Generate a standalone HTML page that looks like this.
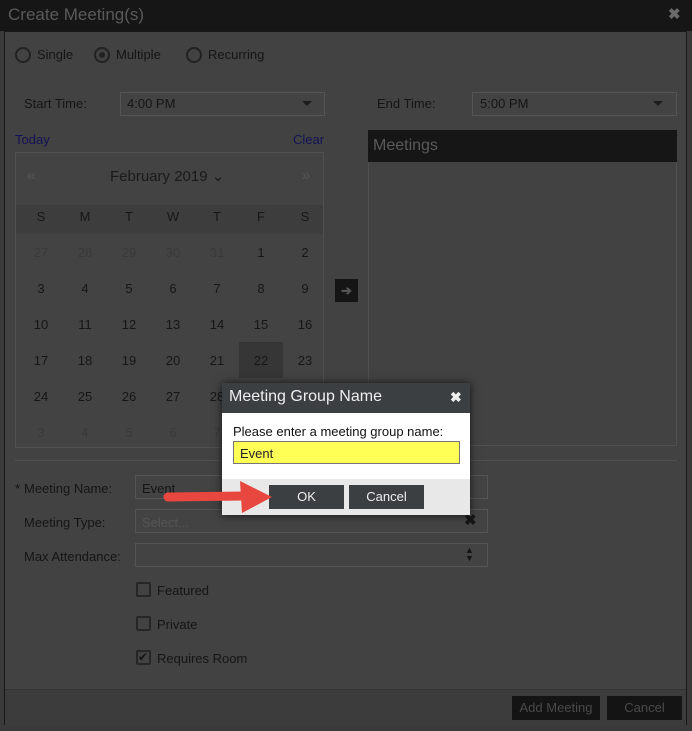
<!DOCTYPE html><html><head><style>
body{margin:0;width:692px;height:731px;background:#3a3a3a;font-family:"Liberation Sans",sans-serif;position:relative;overflow:hidden;font-size:13px;color:#151515}
.a{position:absolute}
.t{color:#111}
.sel{border:1px solid #555;background:#434343}
.cal td{width:44px;height:36px;text-align:center;font-size:13px;color:#161616;padding:0}
</style></head><body>
<div class="a" style="left:0;top:0;width:692px;height:31px;background:#161616"></div>
<div class="a" style="left:8px;top:5px;font-size:17px;color:#5a5a5a">Create Meeting(s)</div>
<div class="a" style="left:668px;top:5px;font-size:15px;color:#6a6a6a;font-weight:bold">✖</div>
<div class="a" style="left:4px;top:31px;width:683px;height:694px;background:#424242;border:1px solid #181818;box-sizing:border-box"></div>
<!-- radios -->
<div class="a" style="left:15px;top:47px;width:12px;height:12px;border:2px solid #222;border-radius:50%"></div>
<div class="a" style="left:37px;top:47px">Single</div>
<div class="a" style="left:94px;top:47px;width:12px;height:12px;border:2px solid #222;border-radius:50%"></div>
<div class="a" style="left:99px;top:52px;width:6px;height:6px;background:#222;border-radius:50%"></div>
<div class="a" style="left:116px;top:47px">Multiple</div>
<div class="a" style="left:186px;top:47px;width:12px;height:12px;border:2px solid #222;border-radius:50%"></div>
<div class="a" style="left:208px;top:47px">Recurring</div>
<div class="a" style="left:24px;top:96px">Start Time:</div>
<div class="a sel" style="left:120px;top:92px;width:203px;height:22px"></div>
<div class="a" style="left:127px;top:96px">4:00 PM</div>
<div class="a" style="left:302px;top:101px;border:5px solid transparent;border-top:5px solid #1c1c1c"></div>
<div class="a" style="left:377px;top:96px">End Time:</div>
<div class="a sel" style="left:472px;top:92px;width:203px;height:22px"></div>
<div class="a" style="left:480px;top:96px">5:00 PM</div>
<div class="a" style="left:653px;top:101px;border:5px solid transparent;border-top:5px solid #1c1c1c"></div>
<div class="a" style="left:15px;top:132px;color:#121256">Today</div>
<div class="a" style="left:293px;top:132px;color:#121256">Clear</div>
<div class="a" style="left:15px;top:152px;width:309px;height:296px;background:#434343;border:1px solid #505050;box-sizing:border-box"></div>
<div class="a" style="left:16px;top:205px;width:307px;height:29px;background:#3d3d3d"></div>
<div class="a" style="left:27px;top:167px;color:#555;font-size:15px">«</div>
<div class="a" style="left:302px;top:167px;color:#555;font-size:15px">»</div>
<div class="a" style="left:110px;top:167px;font-size:15px;color:#1a1a1a">February 2019 &#8964;</div>
<table class="a cal" style="left:19px;top:198px;border-collapse:collapse">
<tr><td>S</td><td>M</td><td>T</td><td>W</td><td>T</td><td>F</td><td>S</td></tr>
<tr style="color:#333"><td style="color:#3a3a3a">27</td><td style="color:#3a3a3a">28</td><td style="color:#3a3a3a">29</td><td style="color:#3a3a3a">30</td><td style="color:#3a3a3a">31</td><td>1</td><td>2</td></tr>
<tr><td>3</td><td>4</td><td>5</td><td>6</td><td>7</td><td>8</td><td>9</td></tr>
<tr><td>10</td><td>11</td><td>12</td><td>13</td><td>14</td><td>15</td><td>16</td></tr>
<tr><td>17</td><td>18</td><td>19</td><td>20</td><td>21</td><td style="background:#363636">22</td><td>23</td></tr>
<tr><td>24</td><td>25</td><td>26</td><td>27</td><td>28</td><td></td><td></td></tr>
<tr><td style="color:#3a3a3a">3</td><td style="color:#3a3a3a">4</td><td style="color:#3a3a3a">5</td><td style="color:#3a3a3a">6</td><td style="color:#3a3a3a">7</td><td></td><td></td></tr>
</table>
<div class="a" style="left:335px;top:279px;width:23px;height:23px;background:#151515;color:#555;text-align:center;line-height:23px;font-weight:bold">➔</div>
<div class="a" style="left:368px;top:130px;width:309px;height:316px;border:1px solid #505050;box-sizing:border-box"></div>
<div class="a" style="left:368px;top:130px;width:309px;height:32px;background:#161616"></div>
<div class="a" style="left:373px;top:137px;font-size:16px;color:#5a5a5a">Meetings</div>
<div class="a" style="left:15px;top:460px;width:662px;height:1px;background:#505050"></div>
<div class="a" style="left:15px;top:481px">*</div>
<div class="a" style="left:24px;top:481px">Meeting Name:</div>
<div class="a sel" style="left:135px;top:475px;width:351px;height:22px"></div>
<div class="a" style="left:142px;top:481px">Event</div>
<div class="a" style="left:24px;top:515px">Meeting Type:</div>
<div class="a sel" style="left:135px;top:509px;width:351px;height:22px"></div>
<div class="a" style="left:142px;top:515px;color:#555">Select...</div>
<div class="a" style="left:464px;top:511px;color:#151515;font-size:15px;font-weight:bold">✖</div>
<div class="a" style="left:24px;top:549px">Max Attendance:</div>
<div class="a sel" style="left:135px;top:543px;width:351px;height:22px"></div>
<div class="a" style="left:465px;top:546px;font-size:9px;line-height:8px;color:#151515">▲<br>▼</div>
<div class="a" style="left:136px;top:582px;width:11px;height:11px;border:2px solid #262626;border-radius:2px"></div>
<div class="a" style="left:157px;top:583px">Featured</div>
<div class="a" style="left:136px;top:616px;width:11px;height:11px;border:2px solid #262626;border-radius:2px"></div>
<div class="a" style="left:157px;top:617px">Private</div>
<div class="a" style="left:136px;top:650px;width:11px;height:11px;border:2px solid #262626;border-radius:2px;font-size:12px;line-height:10px">✔</div>
<div class="a" style="left:157px;top:651px">Requires Room</div>
<div class="a" style="left:5px;top:689px;width:681px;height:35px;background:#3c3c3c;border-top:1px solid #333"></div>
<div class="a" style="left:512px;top:696px;width:88px;height:24px;background:#141414;color:#4a4a4a;text-align:center;line-height:24px">Add Meeting</div>
<div class="a" style="left:607px;top:696px;width:75px;height:24px;background:#141414;color:#4a4a4a;text-align:center;line-height:24px">Cancel</div>
<!-- modal -->
<div class="a" style="left:222px;top:383px;width:248px;height:132px;box-shadow:0 0 8px rgba(0,0,0,.7);background:#fff"></div>
<div class="a" style="left:222px;top:383px;width:248px;height:30px;background:#3c3f41"></div>
<div class="a" style="left:229px;top:388px;font-size:16px;color:#eee">Meeting Group Name</div>
<div class="a" style="left:450px;top:389px;font-size:14px;color:#eee;font-weight:bold">✖</div>
<div class="a" style="left:233px;top:424px;color:#111">Please enter a meeting group name:</div>
<div class="a" style="left:233px;top:441px;width:227px;height:23px;background:#ffff55;border:1px solid #777;box-sizing:border-box"></div>
<div class="a" style="left:240px;top:446px;color:#222">Event</div>
<div class="a" style="left:222px;top:479px;width:248px;height:36px;background:#e8e8e8"></div>
<div class="a" style="left:269px;top:485px;width:75px;height:24px;background:#3c3f41;color:#eee;text-align:center;line-height:24px">OK</div>
<div class="a" style="left:349px;top:485px;width:75px;height:24px;background:#3c3f41;color:#eee;text-align:center;line-height:24px">Cancel</div>
<svg class="a" style="left:160px;top:478px" width="120" height="40"><path d="M8 19 L85 18" stroke="#e8473f" stroke-width="9" stroke-linecap="round"/><path d="M80 3 L112 19 L82 35 Z" fill="#e8473f"/></svg>
</body></html>
